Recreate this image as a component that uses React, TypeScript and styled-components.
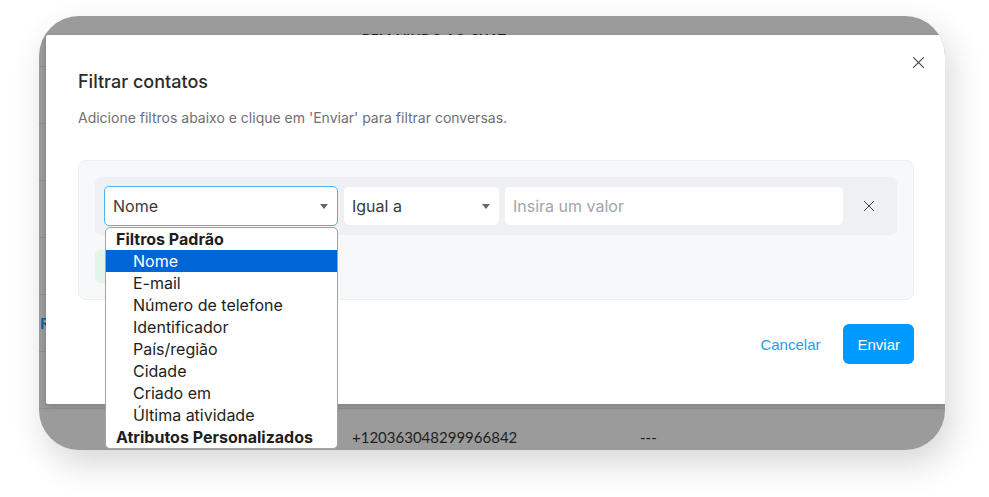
import { createGlobalStyle, styled } from 'styled-components';

const GlobalStyle = createGlobalStyle`
  html, body {
    margin: 0;
    padding: 0;
    background: #ffffff;
  }
  body {
    font-family: Inter, 'Noto Sans', sans-serif;
  }
  * {
    box-sizing: border-box;
  }
`;

interface ContactRow {
  name?: string;
  phone?: string;
  extra?: string;
}

// tabela de contatos que fica atrás do modal (só as bordas aparecem)
const headerLabel = 'BEM-VINDO AO CHAT';
const rows: ContactRow[] = [
  {},
  {},
  {},
  {},
  { name: 'Rafael Souza' },
  {},
  { phone: '+120363048299966842', extra: '---' }
];

const filterGroups = [
  {
    label: 'Filtros Padrão',
    options: ['Nome', 'E-mail', 'Número de telefone', 'Identificador', 'País/região', 'Cidade', 'Criado em', 'Última atividade']
  },
  { label: 'Atributos Personalizados', options: [] as string[] }
];

const Caret = () => (
  <svg width="8" height="5" viewBox="0 0 8 5">
    <polygon points="0,0 8,0 4,5" fill="#666" />
  </svg>
);

const CloseIcon = ({ size }: { size: number }) => (
  <svg width={size} height={size} viewBox="0 0 10 10" fill="none" stroke="#444" strokeWidth="1" strokeLinecap="round">
    <path d="M0.5 0.5 L9.5 9.5 M9.5 0.5 L0.5 9.5" />
  </svg>
);

const PlusIcon = () => (
  <svg width="12" height="12" viewBox="0 0 12 12" fill="none" stroke="#2a9d5a" strokeWidth="1.5" strokeLinecap="round">
    <path d="M6 1 V11 M1 6 H11" />
  </svg>
);

const App = () => {
  return (
    <Page>
      <GlobalStyle />
      <Screen>
        <Table>
          <HeadRow>
            <Cell />
            <HeadCell>{headerLabel}</HeadCell>
            <Cell />
          </HeadRow>
          {rows.map((row, i) => (
            <Row key={i}>
              <Cell>{row.name && <NameLink>{row.name}</NameLink>}</Cell>
              <Cell>{row.phone}</Cell>
              <Cell>{row.extra}</Cell>
            </Row>
          ))}
        </Table>

        <Modal>
          <CloseButton>
            <CloseIcon size={11} />
          </CloseButton>
          <Title>Filtrar contatos</Title>
          <Subtitle>Adicione filtros abaixo e clique em 'Enviar' para filtrar conversas.</Subtitle>

          <FilterBox>
            <FilterRow>
              <SelectField>
                <SelectBox $width={234} $focused>
                  <span>Nome</span>
                  <Caret />
                </SelectBox>
                <OptionList>
                  {filterGroups.map((group) => (
                    <div key={group.label}>
                      <GroupLabel>{group.label}</GroupLabel>
                      {group.options.map((opt) => (
                        <OptionItem key={opt} $active={opt === 'Nome'}>
                          {opt}
                        </OptionItem>
                      ))}
                    </div>
                  ))}
                </OptionList>
              </SelectField>
              <SelectBox $width={155}>
                <span>Igual a</span>
                <Caret />
              </SelectBox>
              <ValueInput placeholder="Insira um valor" />
              <RemoveButton>
                <CloseIcon size={10} />
              </RemoveButton>
            </FilterRow>
            <AddButton>
              <PlusIcon />
            </AddButton>
          </FilterBox>

          <Footer>
            <LinkButton>Cancelar</LinkButton>
            <PrimaryButton>Enviar</PrimaryButton>
          </Footer>
        </Modal>
      </Screen>
    </Page>
  );
};

export default App;

const Page = styled.div`
  width: 989px;
  height: 497px;
  padding: 16px 0 0 39px;
  overflow: hidden;
`;

const Screen = styled.div`
  position: relative;
  width: 906px;
  height: 434px;
  border-radius: 40px;
  overflow: hidden;
  background: #9b9b9b;
  box-shadow: 6px 14px 34px rgba(0, 0, 0, 0.16);
`;

const Table = styled.div`
  display: flex;
  flex-direction: column;
  margin-top: -6px;
`;

const Row = styled.div`
  display: grid;
  grid-template-columns: 313px 288px 1fr;
  align-items: center;
  flex-shrink: 0;
  height: 57px;
  border-bottom: 1px solid #8e8e8e;
  font-family: Lato, 'Liberation Sans', sans-serif;
  font-size: 15px;
  color: #1f1f1f;
`;

const HeadRow = styled(Row)`
  padding-top: 2px;
  font-size: 13px;
  font-weight: 700;
  letter-spacing: 0.5px;
`;

const Cell = styled.div`
  white-space: nowrap;
  overflow: hidden;
`;

const HeadCell = styled(Cell)`
  padding-left: 10px;
`;

const NameLink = styled.span`
  display: inline-block;
  padding-left: 1px;
  margin-top: -8px;
  color: #0b5fa5;
  font-weight: 700;
`;

const Modal = styled.div`
  position: absolute;
  left: 7px;
  top: 19px;
  width: 900px;
  display: flex;
  flex-direction: column;
  padding: 35px 32px 40px;
  background: #ffffff;
  border-radius: 2px;
  box-shadow: 0 2px 6px rgba(0, 0, 0, 0.18);
`;

const CloseButton = styled.div`
  position: absolute;
  top: 22px;
  right: 22px;
  display: flex;
`;

const Title = styled.h2`
  margin: 0;
  font-size: 18px;
  line-height: 24px;
  font-weight: 500;
  color: #2b2b2b;
`;

const Subtitle = styled.p`
  margin: 14px 0 0;
  font-size: 14px;
  line-height: 20px;
  color: #6c7079;
`;

const FilterBox = styled.div`
  margin-top: 32px;
  padding: 16px;
  border: 1px solid #eceef1;
  border-radius: 8px;
  background: #f7f8fa;
`;

const FilterRow = styled.div`
  display: flex;
  align-items: center;
  gap: 6px;
  padding: 9px;
  border-radius: 6px;
  background: #eff0f3;
`;

const SelectField = styled.div`
  position: relative;
`;

const SelectBox = styled.div<{ $width: number; $focused?: boolean }>`
  display: flex;
  align-items: center;
  justify-content: space-between;
  width: ${(p) => p.$width}px;
  height: ${(p) => (p.$focused ? 40 : 38)}px;
  padding: 0 9px 0 8px;
  border: ${(p) => (p.$focused ? '1px solid #4ab6f1' : 'none')};
  border-radius: 5px;
  background: #ffffff;
  font-size: 16px;
  color: #3a3a3a;
`;

const OptionList = styled.div`
  position: absolute;
  top: calc(100% + 1px);
  left: 1px;
  width: 233px;
  z-index: 2;
  border: 1px solid #a3a3a3;
  border-radius: 5px;
  background: #ffffff;
  overflow: hidden;
`;

const GroupLabel = styled.div`
  height: 22px;
  line-height: 22px;
  padding-left: 10px;
  font-size: 16px;
  font-weight: 700;
  color: #1e1e1e;
`;

const OptionItem = styled.div<{ $active?: boolean }>`
  height: 22px;
  line-height: 22px;
  padding-left: 27px;
  font-size: 16px;
  color: ${(p) => (p.$active ? '#ffffff' : '#1e1e1e')};
  background: ${(p) => (p.$active ? '#0066d6' : 'transparent')};
`;

const ValueInput = styled.input`
  width: 338px;
  height: 38px;
  padding: 0 8px;
  border: none;
  border-radius: 5px;
  outline: none;
  background: #ffffff;
  font-family: inherit;
  font-size: 16px;
  color: #3a3a3a;
  &::placeholder {
    color: #a0a5ae;
  }
`;

const RemoveButton = styled.div`
  flex: 1;
  display: flex;
  justify-content: center;
  align-items: center;
`;

const AddButton = styled.div`
  display: flex;
  align-items: center;
  justify-content: center;
  width: 130px;
  height: 33px;
  margin-top: 15px;
  border-radius: 5px;
  background: #e2f5e8;
`;

const Footer = styled.div`
  display: flex;
  justify-content: flex-end;
  align-items: center;
  gap: 23px;
  margin-top: 24px;
  font-family: 'Liberation Sans', Arial, sans-serif;
`;

const LinkButton = styled.span`
  font-size: 15px;
  color: #1b9ff0;
`;

const PrimaryButton = styled.div`
  display: flex;
  align-items: center;
  height: 40px;
  padding: 0 14px;
  border-radius: 6px;
  background: #0099ff;
  color: #ffffff;
  font-size: 15px;
`;
